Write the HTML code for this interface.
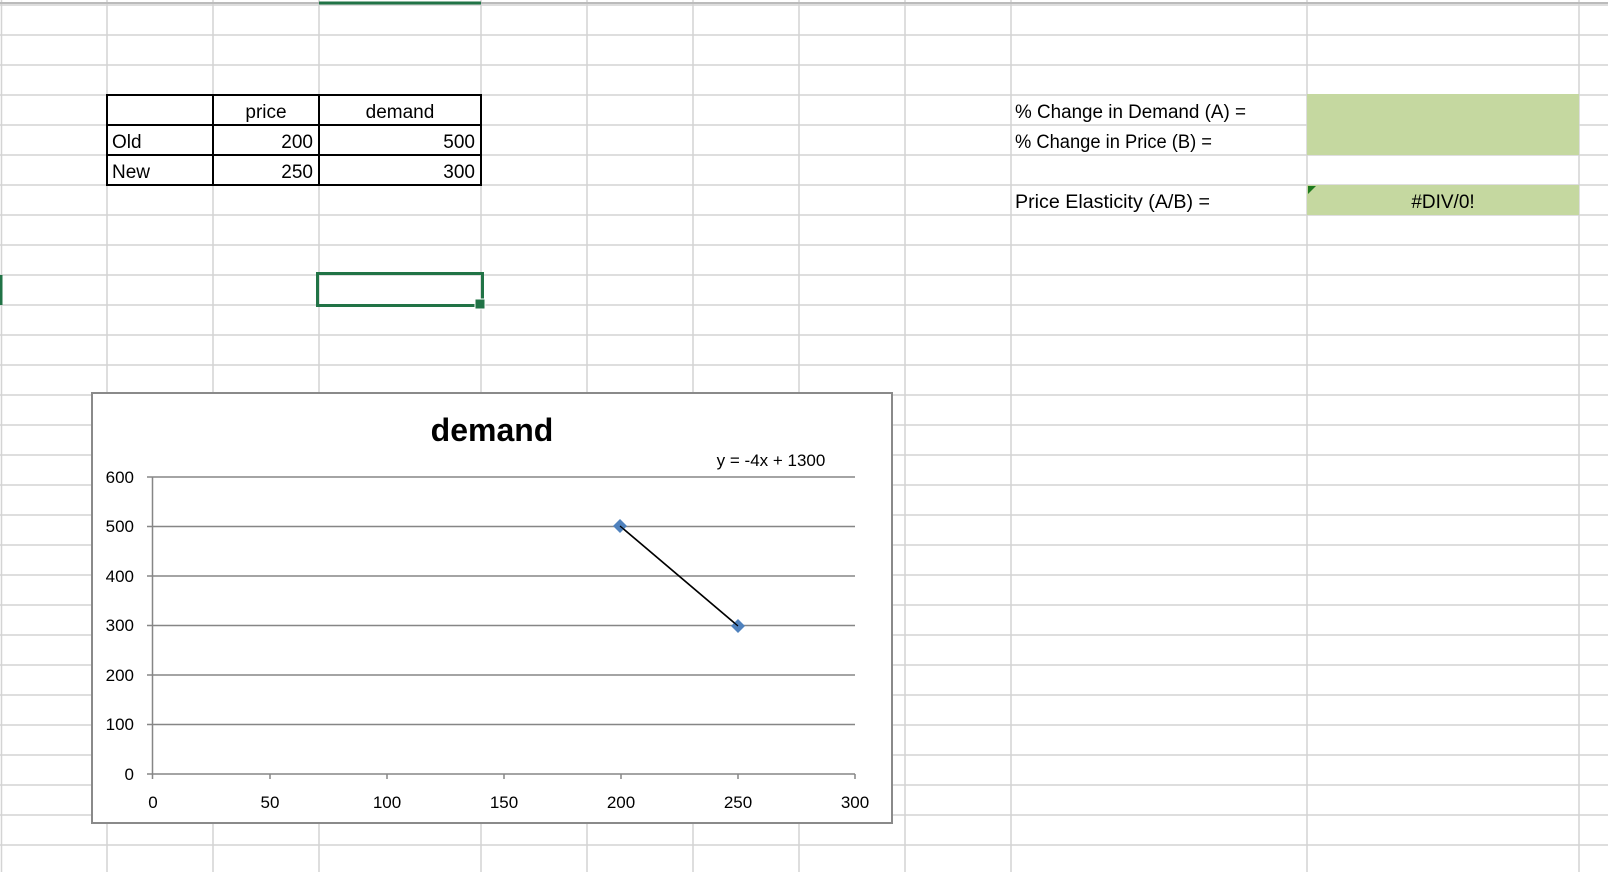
<!DOCTYPE html>
<html><head><meta charset="utf-8"><style>
html,body{margin:0;padding:0;background:#fff;}
body{width:1608px;height:872px;position:relative;overflow:hidden;font-family:"Liberation Sans",sans-serif;}
svg{position:absolute;left:0;top:0;}
</style></head><body>
<svg width="1608" height="872" viewBox="0 0 1608 872" xmlns="http://www.w3.org/2000/svg" font-family="Liberation Sans, sans-serif">
<rect width="1608" height="872" fill="#fff"/>
<g stroke="#d4d4d4" stroke-width="1.5">
<line x1="0" y1="5" x2="1608" y2="5"/><line x1="0" y1="35" x2="1608" y2="35"/><line x1="0" y1="65" x2="1608" y2="65"/><line x1="0" y1="95" x2="1608" y2="95"/><line x1="0" y1="125" x2="1608" y2="125"/><line x1="0" y1="155" x2="1608" y2="155"/><line x1="0" y1="185" x2="1608" y2="185"/><line x1="0" y1="215" x2="1608" y2="215"/><line x1="0" y1="245" x2="1608" y2="245"/><line x1="0" y1="275" x2="1608" y2="275"/><line x1="0" y1="305" x2="1608" y2="305"/><line x1="0" y1="335" x2="1608" y2="335"/><line x1="0" y1="365" x2="1608" y2="365"/><line x1="0" y1="395" x2="1608" y2="395"/><line x1="0" y1="425" x2="1608" y2="425"/><line x1="0" y1="455" x2="1608" y2="455"/><line x1="0" y1="485" x2="1608" y2="485"/><line x1="0" y1="515" x2="1608" y2="515"/><line x1="0" y1="545" x2="1608" y2="545"/><line x1="0" y1="575" x2="1608" y2="575"/><line x1="0" y1="605" x2="1608" y2="605"/><line x1="0" y1="635" x2="1608" y2="635"/><line x1="0" y1="665" x2="1608" y2="665"/><line x1="0" y1="695" x2="1608" y2="695"/><line x1="0" y1="725" x2="1608" y2="725"/><line x1="0" y1="755" x2="1608" y2="755"/><line x1="0" y1="785" x2="1608" y2="785"/><line x1="0" y1="815" x2="1608" y2="815"/><line x1="0" y1="845" x2="1608" y2="845"/>
<line x1="1.5" y1="0" x2="1.5" y2="872"/><line x1="107" y1="0" x2="107" y2="872"/><line x1="213" y1="0" x2="213" y2="872"/><line x1="319" y1="0" x2="319" y2="872"/><line x1="481" y1="0" x2="481" y2="872"/><line x1="587" y1="0" x2="587" y2="872"/><line x1="693" y1="0" x2="693" y2="872"/><line x1="799" y1="0" x2="799" y2="872"/><line x1="905" y1="0" x2="905" y2="872"/><line x1="1011" y1="0" x2="1011" y2="872"/><line x1="1307" y1="0" x2="1307" y2="872"/><line x1="1579" y1="0" x2="1579" y2="872"/>
</g>
<line x1="0" y1="3" x2="1608" y2="3" stroke="#bbb" stroke-width="2"/>
<line x1="319" y1="3" x2="481" y2="3" stroke="#217346" stroke-width="3"/>
<line x1="1" y1="275" x2="1" y2="305" stroke="#217346" stroke-width="3"/>
<!-- green cells -->
<rect x="1307" y="94" width="272" height="61" fill="#c5d8a0"/>
<rect x="1307" y="185" width="272" height="30" fill="#c5d8a0"/>
<polygon points="1308,186 1316,186 1308,194" fill="#1e7a1e"/>
<!-- table -->
<g stroke="#000" stroke-width="2" fill="none">
<rect x="107" y="95" width="374" height="90"/>
<line x1="107" y1="125" x2="481" y2="125"/><line x1="107" y1="155" x2="481" y2="155"/>
<line x1="213" y1="95" x2="213" y2="185"/><line x1="319" y1="95" x2="319" y2="185"/>
</g>
<g font-size="19" fill="#000">
<text x="266" y="118" text-anchor="middle">price</text>
<text x="400" y="118" text-anchor="middle">demand</text>
<text x="112" y="148">Old</text><text x="112" y="178">New</text>
<text x="313" y="148" text-anchor="end">200</text><text x="313" y="178" text-anchor="end">250</text>
<text x="475" y="148" text-anchor="end">500</text><text x="475" y="178" text-anchor="end">300</text>
<text x="1015" y="118" textLength="231" lengthAdjust="spacingAndGlyphs">% Change in Demand (A) =</text>
<text x="1015" y="148" textLength="197" lengthAdjust="spacingAndGlyphs">% Change in Price (B) =</text>
<text x="1015" y="208" textLength="195" lengthAdjust="spacingAndGlyphs">Price Elasticity (A/B) =</text>
<text x="1443" y="208" text-anchor="middle">#DIV/0!</text>
</g>
<!-- selection -->
<rect x="317.5" y="273.5" width="165" height="32" fill="none" stroke="#217346" stroke-width="3"/>
<rect x="475" y="299" width="10" height="10" fill="#217346" stroke="#fff" stroke-width="1"/>
<!-- chart -->
<rect x="92" y="393" width="800" height="430" fill="#fff" stroke="#8a8a8a" stroke-width="2"/>
<g stroke="#868686" stroke-width="1.5">
<line x1="147" y1="477" x2="855" y2="477"/><line x1="147" y1="526.5" x2="855" y2="526.5"/><line x1="147" y1="576" x2="855" y2="576"/><line x1="147" y1="625.5" x2="855" y2="625.5"/><line x1="147" y1="675" x2="855" y2="675"/><line x1="147" y1="724.5" x2="855" y2="724.5"/><line x1="147" y1="774" x2="855" y2="774"/>
<line x1="152.5" y1="477" x2="152.5" y2="779"/>
<line x1="270" y1="774" x2="270" y2="779"/><line x1="387" y1="774" x2="387" y2="779"/><line x1="504" y1="774" x2="504" y2="779"/><line x1="621" y1="774" x2="621" y2="779"/><line x1="738" y1="774" x2="738" y2="779"/><line x1="855" y1="774" x2="855" y2="779"/>
</g>
<text x="492" y="441" text-anchor="middle" font-size="32" font-weight="bold">demand</text>
<text x="771" y="466" text-anchor="middle" font-size="17">y = -4x + 1300</text>
<g font-size="17" text-anchor="end">
<text x="134" y="483">600</text><text x="134" y="532">500</text><text x="134" y="582">400</text><text x="134" y="631">300</text><text x="134" y="681">200</text><text x="134" y="730">100</text><text x="134" y="780">0</text>
</g>
<g font-size="17" text-anchor="middle">
<text x="153" y="808">0</text><text x="270" y="808">50</text><text x="387" y="808">100</text><text x="504" y="808">150</text><text x="621" y="808">200</text><text x="738" y="808">250</text><text x="855" y="808">300</text>
</g>
<line x1="620" y1="526" x2="738" y2="626" stroke="#000" stroke-width="1.6"/>
<polygon points="620,519 627,526 620,533 613,526" fill="#4f81bd"/>
<polygon points="738,619 745,626 738,633 731,626" fill="#4f81bd"/>
<line x1="620" y1="526" x2="738" y2="626" stroke="#000" stroke-width="1.2"/>
</svg>
</body></html>
